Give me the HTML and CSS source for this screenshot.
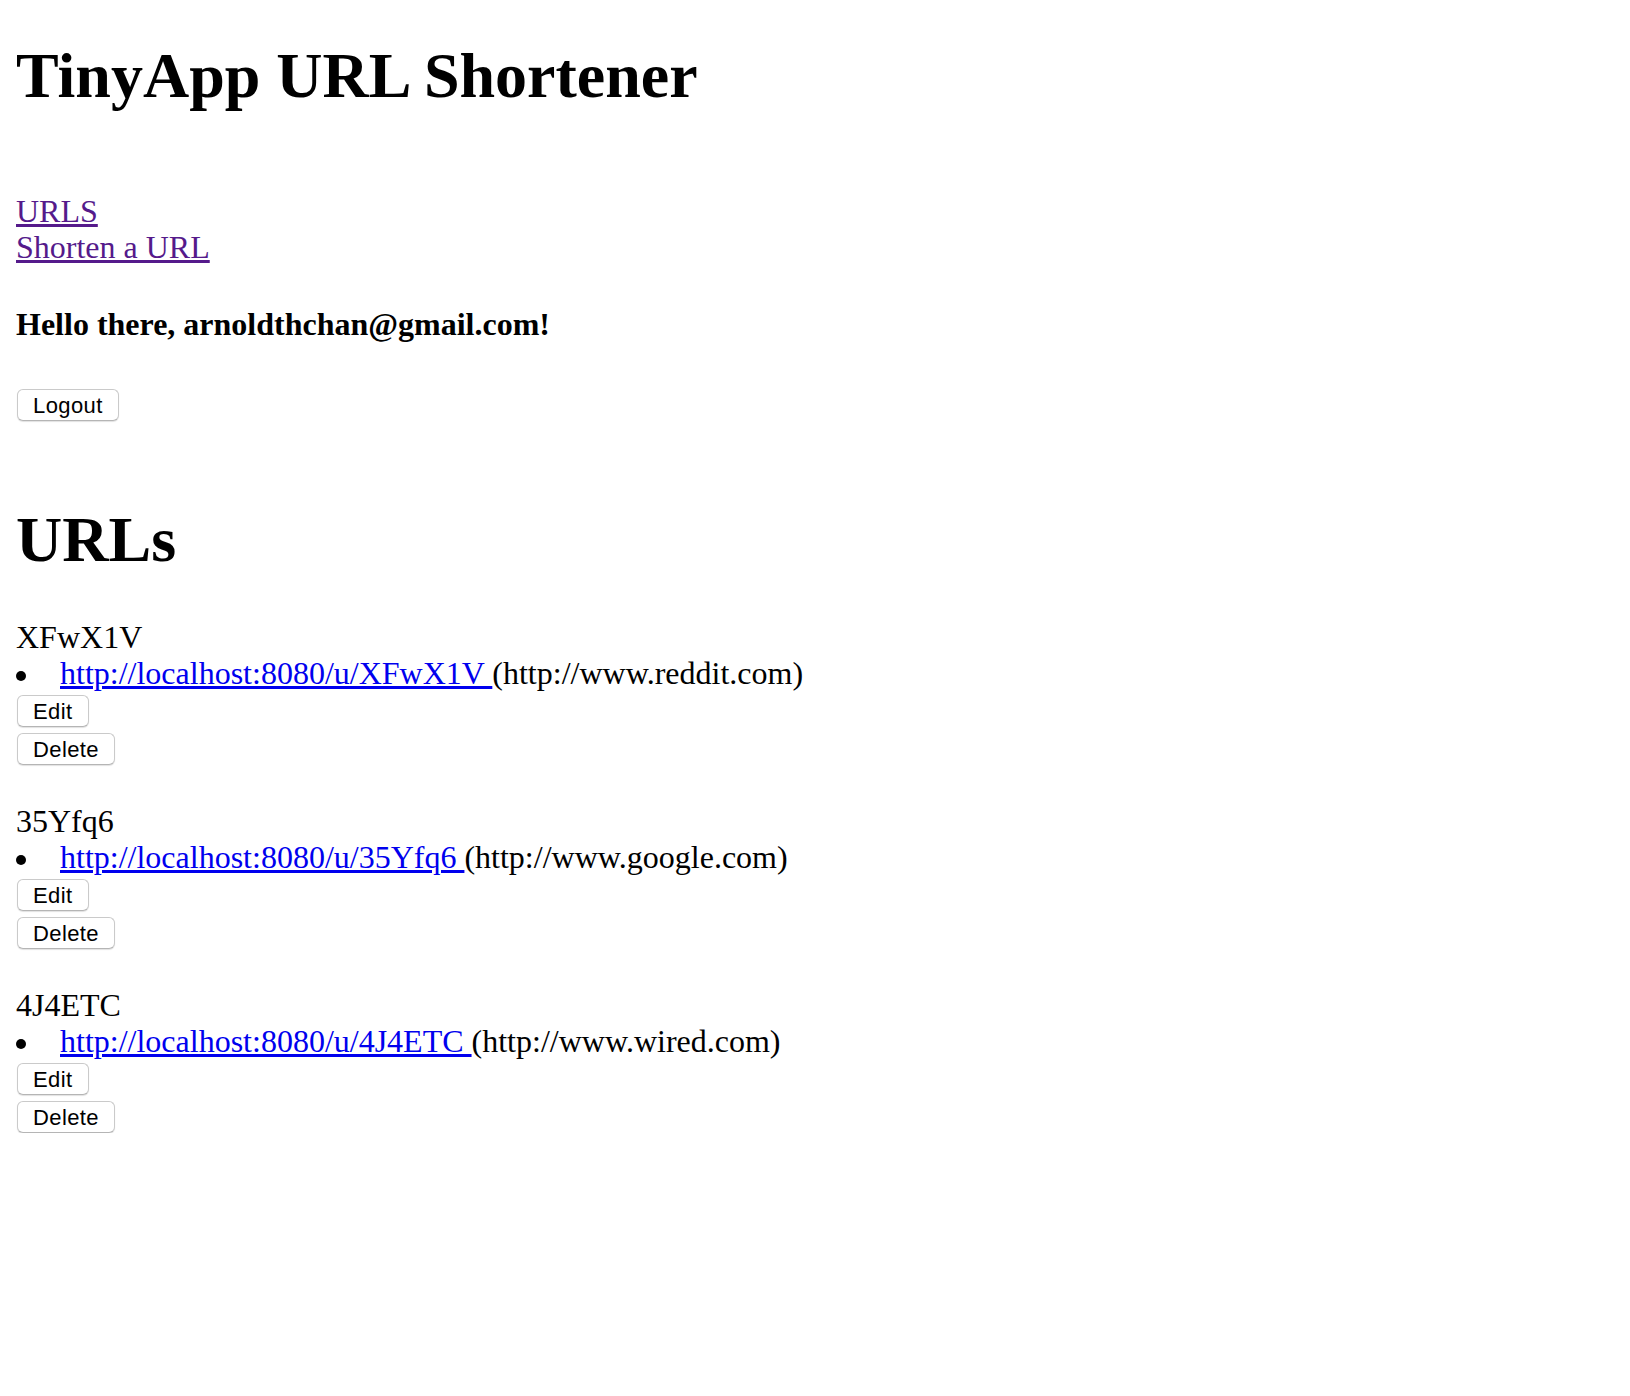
FILE: index.html
```html
<!DOCTYPE html>
<html>
<head>
<meta charset="utf-8">
<title>TinyApp</title>
<link rel="stylesheet" href="styles.css">
</head>
<body>
<header class="header">
  <h1 class="title">TinyApp URL Shortener</h1>
  <nav class="nav">
    <a class="nav-link" href="#">URLS</a>
    <a class="nav-link" href="#">Shorten a URL</a>
  </nav>
  <h4 class="hello">Hello there, arnoldthchan@gmail.com!</h4>
  <form class="logout-form"><button class="btn" type="button">Logout</button></form>
</header>
<main class="main">
  <h1 class="section-title">URLs</h1>
  <div class="items">
    <div class="item">
      <div class="short">XFwX1V</div>
      <ul class="links"><li class="link-row"><a class="url" href="#">http://localhost:8080/u/XFwX1V </a>(http://www.reddit.com)</li></ul>
      <form class="edit-form"><button class="btn" type="button">Edit</button></form>
      <form class="delete-form"><button class="btn" type="button">Delete</button></form>
    </div>
    <div class="item">
      <div class="short">35Yfq6</div>
      <ul class="links"><li class="link-row"><a class="url" href="#">http://localhost:8080/u/35Yfq6 </a>(http://www.google.com)</li></ul>
      <form class="edit-form"><button class="btn" type="button">Edit</button></form>
      <form class="delete-form"><button class="btn" type="button">Delete</button></form>
    </div>
    <div class="item">
      <div class="short">4J4ETC</div>
      <ul class="links"><li class="link-row"><a class="url" href="#">http://localhost:8080/u/4J4ETC </a>(http://www.wired.com)</li></ul>
      <form class="edit-form"><button class="btn" type="button">Edit</button></form>
      <form class="delete-form"><button class="btn" type="button">Delete</button></form>
    </div>
  </div>
</main>
</body>
</html>
```
FILE: styles.css
```css
html, body {
  background: #fff;
}
body {
  margin: 0;
  padding: 0 16px;
  font-family: "Liberation Serif", "Times New Roman", serif;
  font-size: 32px;
  line-height: 36px;
  color: #000;
}
.header, .main {
  display: flow-root;
}
.title {
  font-size: 64px;
  line-height: 72px;
  font-weight: bold;
  margin: 40px 0 0;
}
.nav {
  margin-top: 81px;
  display: flex;
  flex-direction: column;
  align-items: flex-start;
}
.nav-link {
  color: #551a8b;
  text-decoration: underline;
}
.hello {
  font-size: 32px;
  line-height: 36px;
  font-weight: bold;
  margin: 41px 0 0;
}
.logout-form {
  margin: 47px 0 0;
}
.btn {
  display: block;
  margin: 0 0 0 1px;
  height: 32px;
  padding: 1px 15px 0;
  font-family: "Liberation Sans", Arial, sans-serif;
  font-size: 22px;
  letter-spacing: 0.4px;
  line-height: 29px;
  color: #000;
  background: #fff;
  border: 1px solid #cacaca;
  border-bottom-color: #b5b5b5;
  border-radius: 6px;
  box-shadow: 0 1px 1px rgba(0, 0, 0, 0.12);
  cursor: default;
}
.section-title {
  font-size: 64px;
  line-height: 72px;
  font-weight: bold;
  margin: 83px 0 0;
}
.items {
  margin-top: 43px;
  display: flex;
  flex-direction: column;
  gap: 38px;
}
.item {
  display: flex;
  flex-direction: column;
  align-items: flex-start;
}
.short {
  height: 36px;
}
.links {
  list-style: none;
  margin: 0;
  padding: 0;
}
.link-row {
  white-space: pre;
}
.link-row::before {
  content: "";
  display: inline-block;
  width: 10px;
  height: 10px;
  border-radius: 50%;
  background: #000;
  vertical-align: 3px;
  margin-right: 34px;
}
.url {
  color: #0000ee;
  text-decoration: underline;
}
.edit-form {
  margin: 4px 0 0;
}
.delete-form {
  margin: 6px 0 0;
}
```
